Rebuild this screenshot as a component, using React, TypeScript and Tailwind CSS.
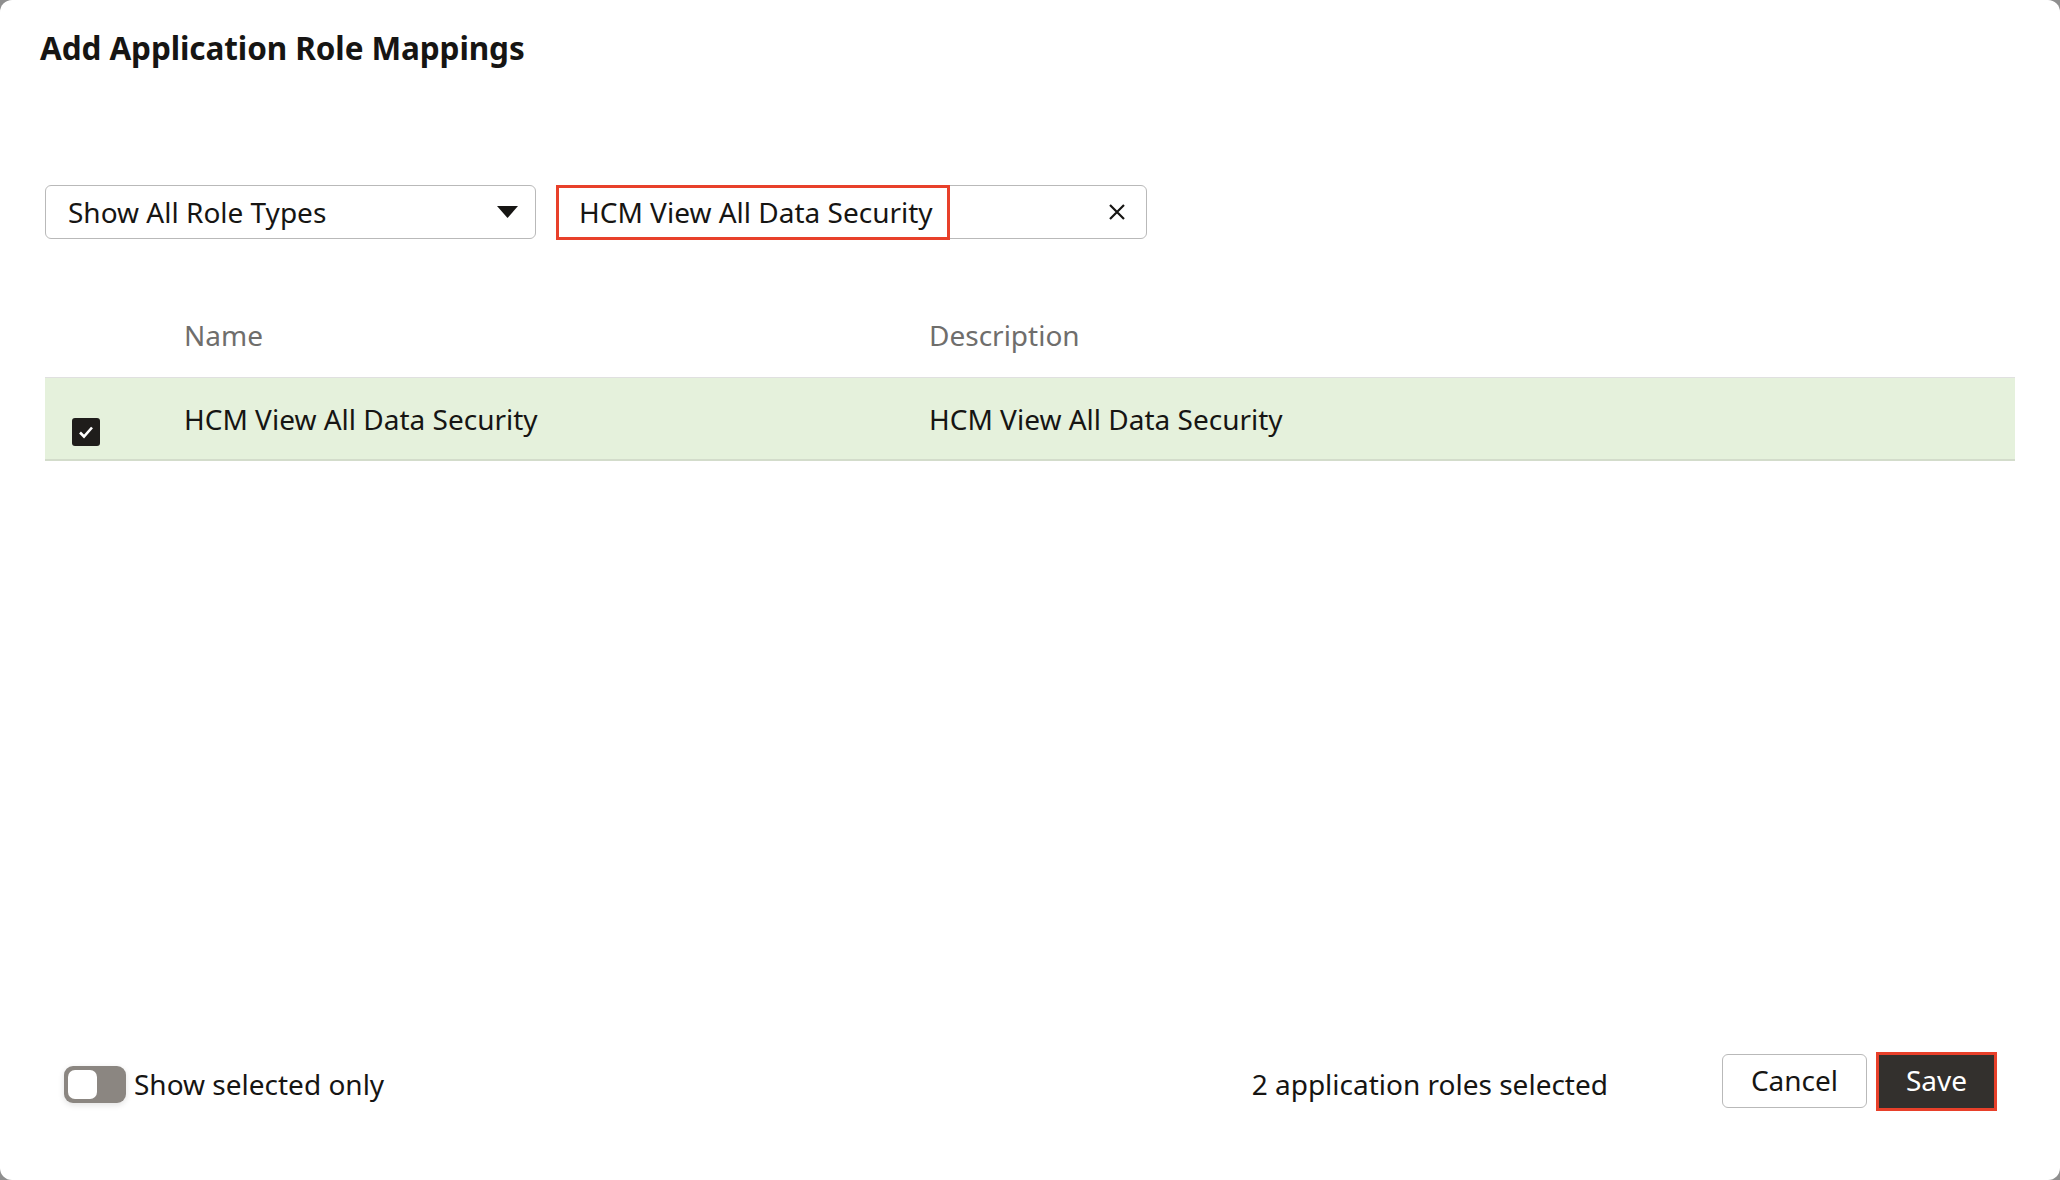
import React, { useState } from 'react';

const font = { fontFamily: '"Noto Sans", "Open Sans", Arial, sans-serif' };

const App: React.FC = () => {
  const [showSelected, setShowSelected] = useState(false);
  const [checked, setChecked] = useState(true);

  return (
    <div className="w-[2060px] h-[1180px] bg-[#8f8f8f]" style={font}>
      <div className="h-full rounded-[12px] bg-white flex flex-col text-[#161513]">
        {/* Title */}
        <h1 className="pt-[29px] pl-[40px] text-[31.5px] leading-[38px] font-bold tracking-[-0.1px]">Add Application Role Mappings</h1>

        {/* Filters */}
        <div className="mt-[118px] px-[45px] flex gap-[20px]">
          <div className="w-[491px] h-[54px] border-[1.5px] border-[#b9b9b9] rounded-[6px] flex items-center justify-between pl-[22px] pr-[17px]">
            <span className="text-[28px] leading-none">Show All Role Types</span>
            <svg width="21" height="12" viewBox="0 0 21 12">
              <path d="M0 0 H21 L10.5 12 Z" fill="#161513" />
            </svg>
          </div>
          <div className="relative w-[591px] h-[54px] border-[1.5px] border-[#b9b9b9] rounded-[6px] flex items-center justify-between pl-[22px] pr-[20px]">
            <span className="text-[28px] leading-none">HCM View All Data Security</span>
            <svg width="18" height="18" viewBox="0 0 18 18">
              <path d="M2 2 L16 16 M16 2 L2 16" stroke="#161513" strokeWidth="2.2" />
            </svg>
            <div className="absolute left-[-1.5px] top-[-1.5px] bottom-[-2px] w-[394px] border-[3px] border-[#e8402a] pointer-events-none" />
          </div>
        </div>

        {/* Table */}
        <div className="mt-[57px] mx-[45px]">
          <div className="h-[81px] flex items-center text-[28px] text-[#6f6e6c] pb-[4px]">
            <div className="w-[139px]" />
            <div className="w-[745px]">Name</div>
            <div>Description</div>
          </div>
          <div className="h-[84px] flex items-center bg-[#e5f1dc] border-t-[1.5px] border-[#e0e0e0] border-b-[2px] border-b-[#d3dccb] text-[28px]">
            <div className="w-[139px] pl-[27px] pt-[26px]">
              <button
                onClick={() => setChecked(!checked)}
                className="w-[28px] h-[28px] rounded-[3px] bg-[#1f1d1b] flex items-center justify-center"
              >
                {checked && (
                  <svg width="18" height="16" viewBox="0 0 18 16">
                    <path d="M3 8.5 L7 12.5 L15 3.5" stroke="white" strokeWidth="2.6" fill="none" />
                  </svg>
                )}
              </button>
            </div>
            <div className="w-[745px]">HCM View All Data Security</div>
            <div>HCM View All Data Security</div>
          </div>
        </div>

        {/* Footer */}
        <div className="mt-auto h-[60px] mb-[69px] flex items-center justify-between pl-[64px] pr-[63px]">
          <div className="flex items-center gap-[8px] pt-[6px]">
            <button
              onClick={() => setShowSelected(!showSelected)}
              className="w-[62px] h-[37px] rounded-[9px] bg-[#8b8681] p-[4px] flex shadow-[0_2px_6px_rgba(0,0,0,0.12)]"
            >
              <span className="w-[29px] h-[29px] rounded-[7px] bg-white" />
            </button>
            <span className="text-[28px]">Show selected only</span>
          </div>
          <div className="flex items-center">
            <span className="text-[28px] pt-[6px] mr-[114px]">2 application roles selected</span>
            <button className="w-[145px] h-[54px] border-[1.5px] border-[#b9b9b9] rounded-[6px] text-[28px] bg-white pb-[2px]">Cancel</button>
            <button className="ml-[9px] w-[121px] h-[59px] border-[3px] border-[#e8402a] bg-[#33302d] text-white text-[28px] pb-[2px]">Save</button>
          </div>
        </div>
      </div>
    </div>
  );
};

export default App;
